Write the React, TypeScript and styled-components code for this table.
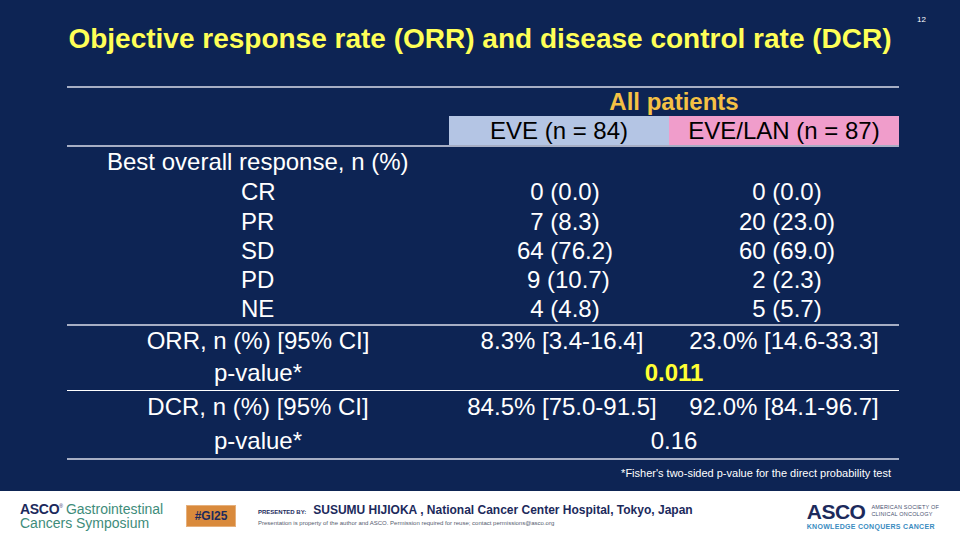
import React from "react";
import styled, { createGlobalStyle } from "styled-components";

const GlobalStyle = createGlobalStyle`
  html, body { margin: 0; padding: 0; }
  body { font-family: "Liberation Sans", Arial, sans-serif; }
`;

const COLS = "382px 220px 230px";
const NAVY = "#0d2454";
const RULE = "#a6aec4";

const Slide = styled.div`
  width: 960px;
  height: 540px;
  display: flex;
  flex-direction: column;
  overflow: hidden;
`;

const Main = styled.main`
  position: relative;
  height: 491px;
  background: ${NAVY};
  display: flex;
  flex-direction: column;
`;

const PageNum = styled.span`
  position: absolute;
  top: 15px;
  left: 917px;
  font-size: 8px;
  color: #ffffff;
`;

const Title = styled.h1`
  margin: 22px 0 0 0;
  height: 34px;
  line-height: 34px;
  text-align: center;
  font-size: 28px;
  font-weight: 700;
  color: #ffff57;
  white-space: nowrap;
`;

const Table = styled.section`
  margin: 30px 0 0 67px;
  width: 832px;
  border-top: 2px solid ${RULE};
  display: flex;
  flex-direction: column;
`;

const Row = styled.div<{ $h: number; $rule?: string; $ruleW?: number }>`
  display: grid;
  grid-template-columns: ${COLS};
  height: ${(p) => p.$h}px;
  align-items: center;
  color: #ffffff;
  font-size: 24px;
  border-bottom: ${(p) => (p.$rule ? `${p.$ruleW ?? 2}px solid ${p.$rule}` : "none")};
  box-sizing: content-box;
`;

const GroupHead = styled.div`
  grid-column: 2 / 4;
  text-align: center;
  font-weight: 700;
  color: #f5c144;
`;

const ArmCell = styled.div<{ $bg: string }>`
  align-self: stretch;
  display: flex;
  align-items: center;
  justify-content: center;
  background: ${(p) => p.$bg};
  color: #000000;
`;

const Label = styled.div<{ $indent?: number; $center?: boolean }>`
  padding-left: ${(p) => p.$indent ?? 0}px;
  text-align: ${(p) => (p.$center ? "center" : "left")};
  white-space: nowrap;
`;

const Value = styled.div<{ $pad?: number }>`
  padding-left: ${(p) => p.$pad ?? 0}px;
  text-align: center;
  white-space: pre;
`;

const PValue = styled.div<{ $hi?: boolean }>`
  grid-column: 2 / 4;
  text-align: center;
  font-weight: ${(p) => (p.$hi ? 700 : 400)};
  color: ${(p) => (p.$hi ? "#ffff33" : "#ffffff")};
`;

const Footnote = styled.p`
  margin: 0;
  height: 26px;
  line-height: 26px;
  padding-right: 8px;
  text-align: right;
  font-size: 11px;
  color: #ffffff;
`;

const Footer = styled.footer`
  height: 49px;
  background: #ffffff;
  display: flex;
  align-items: center;
`;

const ConfLogo = styled.div`
  margin-left: 20px;
  width: 145px;
  display: flex;
  flex-direction: column;
  font-size: 14px;
  line-height: 15px;
  color: #3e8c7a;
  margin-top: -1px;
  white-space: nowrap;
`;

const AscoSmall = styled.span`
  font-weight: 700;
  color: #1c2a5c;
  letter-spacing: -0.3px;
`;

const Reg = styled.sup`
  font-size: 5px;
  color: #1c2a5c;
  margin-right: 3px;
`;

const Badge = styled.div`
  margin-left: 21px;
  width: 48px;
  height: 20px;
  background: #d98a3c;
  border: 1px solid #e6b07c;
  display: flex;
  align-items: center;
  justify-content: center;
  font-size: 12px;
  font-weight: 700;
  color: #1c2a5c;
`;

const Presenter = styled.div`
  margin-left: 22px;
  display: flex;
  flex-direction: column;
  gap: 3px;
  margin-top: -2px;
`;

const PresLine = styled.div`
  display: flex;
  align-items: baseline;
  gap: 7px;
`;

const PresTag = styled.span`
  font-size: 6px;
  font-weight: 700;
  color: #1c2a5c;
`;

const PresName = styled.span`
  font-size: 12px;
  font-weight: 700;
  color: #1c2a5c;
`;

const Disclaimer = styled.span`
  font-size: 6px;
  color: #555b6e;
`;

const Spacer = styled.div`
  flex: 1;
`;

const AscoLogo = styled.div`
  margin-right: 21px;
  display: flex;
  flex-direction: column;
  gap: 2px;
`;

const AscoTop = styled.div`
  display: flex;
  align-items: center;
  gap: 6px;
`;

const AscoBig = styled.span`
  font-size: 21px;
  line-height: 19px;
  font-weight: 700;
  color: #1c2a5c;
  letter-spacing: -0.5px;
`;

const AscoSub = styled.span`
  font-size: 5.5px;
  line-height: 7px;
  color: #4a5270;
  letter-spacing: 0.2px;
`;

const Motto = styled.span`
  font-size: 7px;
  font-weight: 700;
  color: #3a8cbf;
  letter-spacing: 0.3px;
  white-space: nowrap;
`;

type Resp = { k: string; a: string; b: string; h: number };
const responses: Resp[] = [
  { k: "CR", a: "0 (0.0)", b: "0 (0.0)", h: 30 },
  { k: "PR", a: "7 (8.3)", b: "20 (23.0)", h: 29 },
  { k: "SD", a: "64 (76.2)", b: "60 (69.0)", h: 29 },
  { k: "PD", a: " 9 (10.7)", b: "2 (2.3)", h: 29 },
  { k: "NE", a: "4 (4.8)", b: "5 (5.7)", h: 30 },
];

export default function App() {
  return (
    <>
      <GlobalStyle />
      <Slide>
        <Main>
          <PageNum>12</PageNum>
          <Title>Objective response rate (ORR) and disease control rate (DCR)</Title>
          <Table>
            <Row $h={28}>
              <GroupHead>All patients</GroupHead>
            </Row>
            <Row $h={29} $rule={RULE}>
              <div />
              <ArmCell $bg="#b4c5e4">EVE (n = 84)</ArmCell>
              <ArmCell $bg="#f09dcb">EVE/LAN (n = 87)</ArmCell>
            </Row>
            <Row $h={30}>
              <Label $indent={40}>Best overall response, n (%)</Label>
            </Row>
            {responses.map((r, i) => (
              <Row key={r.k} $h={r.h} $rule={i === responses.length - 1 ? RULE : undefined}>
                <Label $indent={174}>{r.k}</Label>
                <Value $pad={12}>{r.a}</Value>
                <Value $pad={6}>{r.b}</Value>
              </Row>
            ))}
            <Row $h={30}>
              <Label $center>ORR, n (%) [95% CI]</Label>
              <Value $pad={6}>8.3% [3.4-16.4]</Value>
              <Value>23.0% [14.6-33.3]</Value>
            </Row>
            <Row $h={34} $rule="#ffffff" $ruleW={1}>
              <Label $center>p-value*</Label>
              <PValue $hi>0.011</PValue>
            </Row>
            <Row $h={32}>
              <Label $center>DCR, n (%) [95% CI]</Label>
              <Value $pad={6}>84.5% [75.0-91.5]</Value>
              <Value>92.0% [84.1-96.7]</Value>
            </Row>
            <Row $h={35} $rule={RULE}>
              <Label $center>p-value*</Label>
              <PValue>0.16</PValue>
            </Row>
            <Footnote>*Fisher's two-sided p-value for the direct probability test</Footnote>
          </Table>
        </Main>
        <Footer>
          <ConfLogo>
            <div>
              <AscoSmall>ASCO</AscoSmall>
              <Reg>®</Reg>
              Gastrointestinal
            </div>
            <div>Cancers Symposium</div>
          </ConfLogo>
          <Badge>#GI25</Badge>
          <Presenter>
            <PresLine>
              <PresTag>PRESENTED BY:</PresTag>
              <PresName>SUSUMU HIJIOKA , National Cancer Center Hospital, Tokyo, Japan</PresName>
            </PresLine>
            <Disclaimer>
              Presentation is property of the author and ASCO. Permission required for reuse; contact permissions@asco.org
            </Disclaimer>
          </Presenter>
          <Spacer />
          <AscoLogo>
            <AscoTop>
              <AscoBig>ASCO</AscoBig>
              <AscoSub>
                AMERICAN SOCIETY OF
                <br />
                CLINICAL ONCOLOGY
              </AscoSub>
            </AscoTop>
            <Motto>KNOWLEDGE CONQUERS CANCER</Motto>
          </AscoLogo>
        </Footer>
      </Slide>
    </>
  );
}
